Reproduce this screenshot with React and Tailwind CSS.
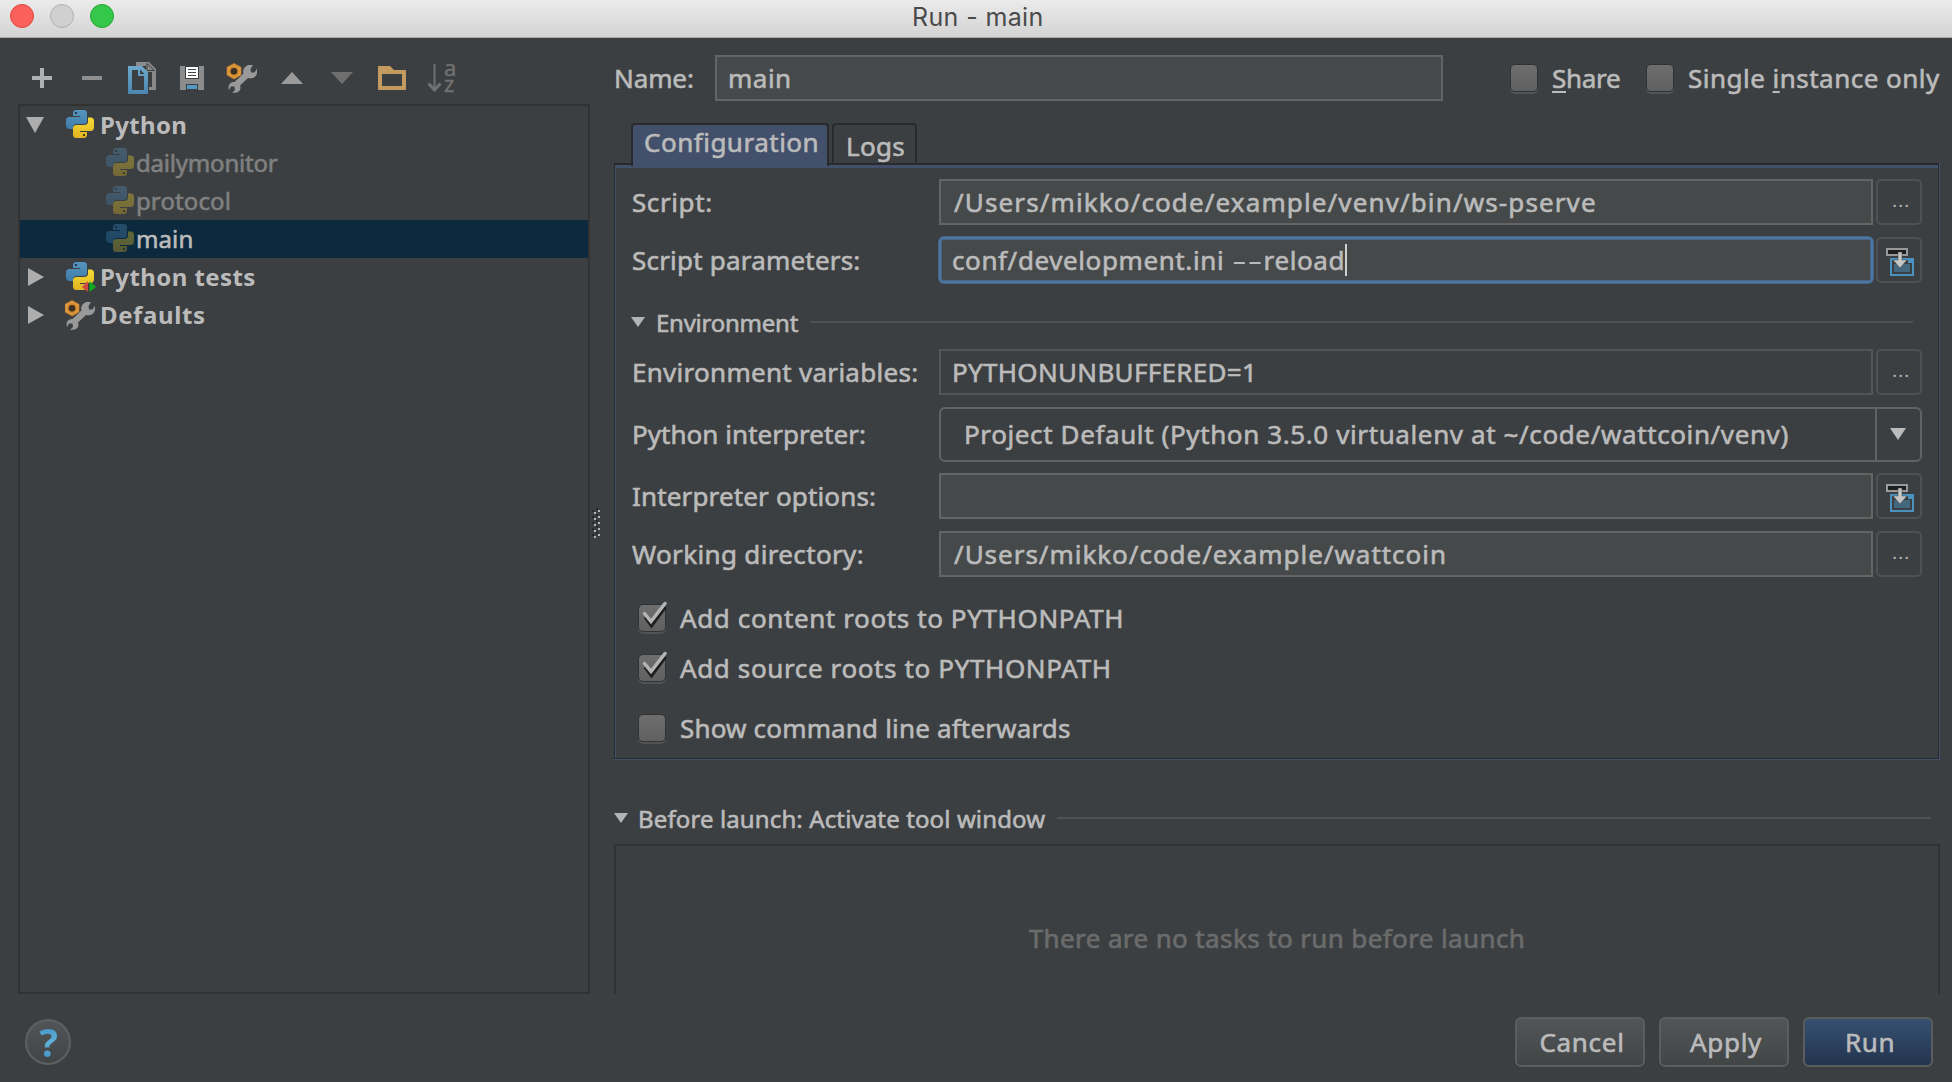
import React from "react";

const TEXT = "font-['Noto_Sans',sans-serif] whitespace-pre";

function Glyph({ children, size = 50, className = "" }) {
  return (
    <svg width={size} height={size} viewBox={`0 0 ${size} ${size}`} className={`shrink-0 ${className}`}>
      {children}
    </svg>
  );
}

function Defs() {
  return (
    <svg width="0" height="0" className="absolute">
      <defs>
        <linearGradient id="pyBlue" x1="0" y1="0" x2="0" y2="1">
          <stop offset="0" stopColor="#5594be" />
          <stop offset="1" stopColor="#3f7cab" />
        </linearGradient>
        <linearGradient id="pyYellow" x1="0" y1="0" x2="0" y2="1">
          <stop offset="0" stopColor="#f5dc35" />
          <stop offset="1" stopColor="#dfb322" />
        </linearGradient>
        <linearGradient id="pageBlue" x1="0" y1="0" x2="0" y2="1">
          <stop offset="0" stopColor="#6fa9cd" />
          <stop offset="1" stopColor="#4a86ae" />
        </linearGradient>
        <radialGradient id="nut">
          <stop offset="0.3" stopColor="#c97a20" />
          <stop offset="1" stopColor="#e5a548" />
        </radialGradient>
      </defs>
    </svg>
  );
}

function PythonIcon({ dim, tests }) {
  return (
    <svg width="30" height="30" viewBox="0 0 30 30" className={dim ? "shrink-0 opacity-35" : "shrink-0"}>
      <path fill="url(#pyBlue)" d="M10.5 0h7Q21 0 21 3v7.500Q21 14 17.500 14H11Q7 14 7 17.500V19H4Q0 19 0 15v-4.500Q0 7 3.500 7H14V6H7V3Q7 0 10.500 0z" />
      <path fill="url(#pyYellow)" d="M17.500 28h-7Q7 28 7 25v-6.500Q7 15 10.500 15H17.500Q22 15 22 11.500V7.500H24.500Q28 7.500 28 11v6Q28 21 24.500 21H14v1h7v3Q21 28 17.500 28z" />
      <rect x="9" y="2" width="2" height="2" fill="#223746" />
      <rect x="17" y="24" width="2" height="2" fill="#4a3c10" />
      {tests && (
        <>
          <path d="M16 25l6-6v11z" fill="#d04a45" />
          <path d="M30 25l-6.500-6v11z" fill="#0cae1c" />
        </>
      )}
    </svg>
  );
}

function WrenchShapes() {
  return (
    <>
      <path
        fill="#999"
        d="M28 14 31 12 36 12 33.500 16 34 19.500 37.500 19.500 40 15.500 40 20C39 24.500 35 26 31 25L23 32.500C24.500 36 22.500 38.500 20 39.500L15 40 18 37 17.500 33.500 14 33.500 12 37C10.500 32 13 29 17.500 29L26.500 20.500C25.500 18 26.500 16 28 14z"
      />
      <path fill="url(#nut)" stroke="#b9772a" strokeWidth="0.8" d="M17 10.500 24 14.200V22L17 26 10 22V14.200z" />
      <circle cx="17" cy="18.200" r="3.300" fill="#3c3024" />
    </>
  );
}

function Toolbar() {
  return (
    <div className="-ml-px mt-[15px] mb-px flex h-[50px]">
      <Glyph><path d="M15 23h8v-8h4v8h8v4h-8v8h-4v-8h-8z" fill="#afb1b3" /></Glyph>
      <Glyph><path d="M15 23h20v4H15z" fill="#8f8f8f" /></Glyph>
      <Glyph>
        <path fill="#8a8a8a" d="M19 9h13l7 7v21h-7v-3h3V19h-6v-6H19z" />
        <path fill="#8a8a8a" stroke="#3c3f41" strokeWidth="1" d="M30 10.500v7h7.500z" />
        <path fill="url(#pageBlue)" fillRule="evenodd" d="M11 13h14l6 6v22H11zM15 17v20h12V23h-6v-6z" />
        <path d="M23 16.500V21h4.500z" fill="#3c3f41" />
      </Glyph>
      <Glyph>
        <path fill="#8c8c8c" d="M13 13h24v24H13z" />
        <path fill="#3c3f41" d="M18 13h14v13H18zM19 31h12v6H19z" />
        <path fill="#fff" d="M19 14h12v11H19z" />
        <path stroke="#444" strokeWidth="1.200" d="M21 16.500h8M21 19.500h8M21 22.500h8" />
        <path fill="#5598c6" d="M20 32h10v4H20z" />
      </Glyph>
      <Glyph><WrenchShapes /></Glyph>
      <Glyph><path d="M25 19 36 31H14z" fill="#9a9a9a" /></Glyph>
      <Glyph><path d="M14 19h22L25 31z" fill="#6f6f6f" /></Glyph>
      <Glyph>
        <path fill="#c49a5f" fillRule="evenodd" d="M11 13h12l4 4h12v20H11zM15 21v12h20V21z" />
      </Glyph>
      <Glyph>
        <path d="M17.500 11v24" stroke="#707070" strokeWidth="2" />
        <path d="M11.500 30.500l6 6.500 6-6.500" fill="none" stroke="#707070" strokeWidth="3" />
        <text fontSize="22" fill="#707070" stroke="#707070" strokeWidth="0.4" fontFamily="Noto Sans">
          <tspan x="27" y="23">a</tspan>
          <tspan x="27" y="39">z</tspan>
        </text>
      </Glyph>
    </div>
  );
}

function Twisty({ open }) {
  return (
    <svg width="18" height="18" viewBox="0 0 18 18" className="mr-[22px] ml-[6px] shrink-0">
      <path d={open ? "M0 1h18L9 17z" : "M2 0v18l16-9z"} fill="#adadad" />
    </svg>
  );
}

function TreeGroup({ open, icon, label, tracking }) {
  return (
    <div className="flex h-[38px] items-center">
      <Twisty open={open} />
      <span className="flex w-[34px] shrink-0">{icon}</span>
      <span className={`${TEXT} text-[24px] leading-[34px] font-bold ${tracking}`}>{label}</span>
    </div>
  );
}

function TreeLeaf({ label, selected, tracking }) {
  return (
    <div className={`flex h-[38px] items-center pl-[86px] ${selected ? "bg-[#0d293e] text-[#bbbbbb]" : "text-[#808080]"}`}>
      <PythonIcon dim />
      <span className={`${TEXT} -mt-[1px] text-[24px] leading-[34px] [-webkit-text-stroke:0.6px] ${tracking}`}>{label}</span>
    </div>
  );
}

function Tree() {
  return (
    <div className="h-[890px] w-[572px] border-2 border-[#323232]">
      <TreeGroup open icon={<PythonIcon />} label="Python" tracking="tracking-[0.35px]" />
      <TreeLeaf label="dailymonitor" tracking="tracking-[-0.2px]" />
      <TreeLeaf label="protocol" tracking="tracking-[0.1px]" />
      <TreeLeaf label="main" selected tracking="tracking-[0.1px]" />
      <TreeGroup icon={<PythonIcon tests />} label="Python tests" tracking="tracking-[0.42px]" />
      <TreeGroup
        icon={
          <svg width="30" height="30" viewBox="10 10 30 30" className="-ml-px">
            <WrenchShapes />
          </svg>
        }
        label="Defaults"
        tracking="tracking-[0.6px]"
      />
    </div>
  );
}

function Splitter() {
  return (
    <div className="flex w-[24px] items-center pl-[2px]">
      <svg width="8" height="30" viewBox="0 0 8 30" className="mt-[13px]">
        {[0, 6, 12, 18, 24].map((y) => (
          <g key={y}>
            <path d={`M4 ${y}h2v2h-2zM0 ${y + 2}h2v2h-2z`} fill="#26282a" />
            <path d={`M6 ${y + 2}h2v2h-2zM2 ${y + 4}h2v2h-2z`} fill="#b4b4b4" />
          </g>
        ))}
      </svg>
    </div>
  );
}

function Check({ on }) {
  return (
    <span className="relative size-[28px] shrink-0">
      <span className="block size-[28px] rounded-[5px] border border-[#303234] bg-linear-to-b from-[#6e6e6e] to-[#606060] shadow-[0_2px_0_#515354]" />
      {on && (
        <svg width="32" height="32" viewBox="0 0 32 32" className="absolute -top-[3px] left-0">
          <path d="M7 16l6.500 9L27.500 6" fill="none" stroke="#1e1e1e" strokeWidth="3" />
          <path d="M6.500 12.500l6.500 8L27 2.500" fill="none" stroke="#b4b4b4" strokeWidth="3.500" strokeLinecap="round" />
        </svg>
      )}
    </span>
  );
}

function Label({ children, tracking = "", className = "" }) {
  return (
    <span className={`${TEXT} text-[26px] leading-[36px] [-webkit-text-stroke:0.6px] ${tracking} ${className}`}>{children}</span>
  );
}

function SideButton({ children }) {
  return (
    <button className="ml-[3px] flex h-[46px] w-[46px] shrink-0 items-center justify-center rounded-[5px] border-2 border-[#4f5254]">
      {children}
    </button>
  );
}

function Dots() {
  return <span className={`${TEXT} mt-[-2px] ml-[5px] text-[16px] leading-[20px] font-medium tracking-[1.7px]`}>...</span>;
}

function InsertIcon() {
  return (
    <svg width="42" height="42" viewBox="2 2 42 42" className="shrink-0">
      <path d="M11 12h20v6H11z" fill="#1d1e1f" stroke="#999" strokeWidth="2" />
      <path d="M15 22h22v16H15z" fill="none" stroke="#4a93c0" strokeWidth="2" />
      <path d="M32 21h6v5h-6z" fill="#4a93c0" />
      <path d="M18 27h16v8H18z" fill="#43687d" />
      <path d="M22 15h4v8h5l-7 8-7-8h5z" fill="#c6c6c6" stroke="#3c3f41" strokeWidth="0.500" />
    </svg>
  );
}

function Row({ label, labelTracking, children, className = "h-[46px]" }) {
  return (
    <div className={`flex items-center ${className}`}>
      <span className="flex w-[308px] shrink-0 pl-px">
        <Label tracking={labelTracking}>{label}</Label>
      </span>
      {children}
    </div>
  );
}

function Field({ children, className = "border-[#646464] bg-[#45494a] pl-[13px]" }) {
  return <div className={`flex h-[46px] w-[934px] shrink-0 items-center border-2 ${className}`}>{children}</div>;
}

function SectionTitle({ label, tracking, gap, className }) {
  return (
    <div className={`flex items-center ${className}`}>
      <svg width="14" height="10" viewBox="0 0 14 10" className="shrink-0">
        <path d="M0 0h14L7 10z" fill="#b4b4b4" />
      </svg>
      <span className={`${TEXT} pt-[2px] text-[24px] leading-[32px] [-webkit-text-stroke:0.6px] ${tracking} ${gap}`}>{label}</span>
      <span className="h-[2px] grow bg-[#515151]" />
    </div>
  );
}

function Tabs() {
  return (
    <div className="flex h-[40px] pl-[17px]">
      <div className="relative z-10 flex h-[43px] w-[198px] rounded-t-[4px] border-2 border-b-0 border-[#282a2c] bg-[#43506c] pl-[11px]">
        <Label tracking="tracking-[0.5px]" className="-mt-px">Configuration</Label>
      </div>
      <div className="ml-[3px] flex h-[40px] w-[85px] rounded-t-[4px] border-2 border-b-0 border-[#282a2c] pt-[3px] pl-[12px]">
        <Label tracking="tracking-[0.3px]">Logs</Label>
      </div>
    </div>
  );
}

function ConfigPanel() {
  return (
    <div className="h-[597px] border-r border-b border-[#43506c]">
      <div className="h-full border border-t-2 border-[#282a2c]">
        <div className="h-full border-t-[3px] border-l border-[#43506c] pt-[11px] pl-[15px]">
          <Row label="Script:" labelTracking="tracking-[0.6px]">
            <Field><Label tracking="tracking-[1.12px]">/Users/mikko/code/example/venv/bin/ws-pserve</Label></Field>
            <SideButton><Dots /></SideButton>
          </Row>
          <div className="h-[12px]" />
          <Row label="Script parameters:" labelTracking="tracking-[0.2px]">
            <Field className="rounded-[5px] border-[#4b76a6] bg-[#45494a] pl-[11px] shadow-[0_0_0_1px_#466583,inset_0_0_0_1px_#466583]">
              <Label tracking="tracking-[0.6px]">
                conf/development.ini <span className="inline-block w-[32px] origin-left scale-x-[1.75] [-webkit-text-stroke:0]">--</span>reload
              </Label>
              <span className="h-[32px] w-[2px] bg-[#d0d0d0]" />
            </Field>
            <SideButton><InsertIcon /></SideButton>
          </Row>
          <SectionTitle
            label="Environment"
            tracking="tracking-[-0.25px]"
            gap="ml-[11px] mr-[12px]"
            className="h-[66px] pt-[12px] pr-[25px]"
          />
          <Row label="Environment variables:" labelTracking="tracking-[0.28px]">
            <Field className="border-[#555555] pl-[11px]"><Label tracking="tracking-[0.3px]">PYTHONUNBUFFERED=1</Label></Field>
            <SideButton><Dots /></SideButton>
          </Row>
          <div className="h-[12px]" />
          <Row label="Python interpreter:" labelTracking="tracking-[0.04px]" className="h-[55px] [&_span]:pb-px">
            <div className="flex h-[55px] w-[983px] shrink-0 rounded-[6px] border-2 border-[#606263]">
              <span className="flex grow items-center pl-[23px]">
                <Label tracking="tracking-[0.61px]">Project Default (Python 3.5.0 virtualenv at ~/code/wattcoin/venv)</Label>
              </span>
              <span className="flex w-[45px] items-center border-l-2 border-[#606263] pl-[13px]">
                <svg width="16" height="12" viewBox="0 0 16 12">
                  <path d="M0 0h16L8 12z" fill="#bbbbbb" />
                </svg>
              </span>
            </div>
          </Row>
          <div className="h-[11px]" />
          <Row label="Interpreter options:" labelTracking="tracking-[0.15px]">
            <Field />
            <SideButton><InsertIcon /></SideButton>
          </Row>
          <div className="h-[12px]" />
          <Row label="Working directory:" labelTracking="tracking-[0.35px]">
            <Field><Label tracking="tracking-[0.97px]">/Users/mikko/code/example/wattcoin</Label></Field>
            <SideButton><Dots /></SideButton>
          </Row>
          <div className="mt-[27px] flex h-[27px] items-center gap-[14px] pl-[7px]">
            <Check on />
            <Label tracking="tracking-[0.61px]">Add content roots to PYTHONPATH</Label>
          </div>
          <div className="mt-[23px] flex h-[27px] items-center gap-[14px] pl-[7px]">
            <Check on />
            <Label tracking="tracking-[0.62px]">Add source roots to PYTHONPATH</Label>
          </div>
          <div className="mt-[33px] flex h-[27px] items-center gap-[14px] pl-[7px]">
            <Check />
            <Label tracking="tracking-[0.17px]">Show command line afterwards</Label>
          </div>
        </div>
      </div>
    </div>
  );
}

function NameRow() {
  return (
    <div className="mt-[17px] flex h-[46px] items-center">
      <span className="flex w-[101px]"><Label tracking="tracking-[-0.1px]">Name:</Label></span>
      <div className="flex h-[46px] w-[728px] items-center border-2 border-[#646464] bg-[#45494a] pl-[11px]">
        <Label tracking="tracking-[0.5px]">main</Label>
      </div>
      <span className="ml-[67px] flex"><Check /></span>
      <span className="ml-[14px] flex w-[95px]">
        <Label tracking="tracking-[-0.3px]"><span className="underline decoration-2 underline-offset-[3px]">S</span>hare</Label>
      </span>
      <span className="-ml-px flex"><Check /></span>
      <span className="ml-[14px] flex">
        <Label tracking="tracking-[0.48px]">Single <span className="underline decoration-2 underline-offset-[3px]">i</span>nstance only</Label>
      </span>
    </div>
  );
}

function FooterButton({ children, primary, tracking }) {
  return (
    <button
      className={`flex h-[50px] w-[130px] items-center justify-center rounded-[6px] border-2 border-[#5a5c5d] bg-linear-to-b ${
        primary ? "from-[#365071] to-[#23344f]" : "from-[#525658] to-[#414546]"
      }`}
    >
      <Label tracking={tracking} className="-mt-px pl-[4px]">{children}</Label>
    </button>
  );
}

export default function App() {
  return (
    <div className="flex h-[1082px] w-[1952px] flex-col overflow-hidden bg-[#3c3f41] text-[#bbbbbb]">
      <Defs />
      <header className="flex h-[38px] shrink-0 border-b border-[#a9a9a9] bg-linear-to-b from-[#ebebeb] to-[#d3d3d3]">
        <div className="flex w-[912px] gap-[16px] pt-[4px] pl-[10px]">
          <span className="size-[24px] rounded-full border border-[#e2463f] bg-[#fc605b]" />
          <span className="size-[24px] rounded-full border border-[#b0b0b0] bg-[#d0d0d0]" />
          <span className="size-[24px] rounded-full border border-[#25a532] bg-[#34c84a]" />
        </div>
        <span className="font-[Inter,sans-serif] text-[25px] leading-[34px] tracking-[0.37px] whitespace-pre text-[#4a4a4a]">Run - main</span>
      </header>

      <main className="flex h-[956px] shrink-0 pl-[18px]">
        <section className="w-[572px] shrink-0">
          <Toolbar />
          <Tree />
        </section>
        <Splitter />
        <section className="w-[1326px] shrink-0">
          <NameRow />
          <div className="h-[22px]" />
          <Tabs />
          <ConfigPanel />
          <SectionTitle
            label="Before launch: Activate tool window"
            tracking="tracking-[0.12px]"
            gap="ml-[10px] mr-[12px]"
            className="h-[84px] pt-[32px] pr-[9px]"
          />
          <div className="flex h-[150px] justify-center border-2 border-b-0 border-[#323232] pt-[74px] text-[#6c6c6c]">
            <Label tracking="tracking-[0.38px]">There are no tasks to run before launch</Label>
          </div>
        </section>
      </main>

      <footer className="flex h-[88px] items-center justify-between pt-[8px] pr-[19px] pl-[25px]">
        <div className="flex size-[46px] items-center justify-center rounded-full border-2 border-[#5e6061] bg-linear-to-b from-[#515557] to-[#414547]">
          <span className="bg-linear-to-b from-[#3f8ec4] via-[#5fb0d8] to-[#3f8ec4] bg-clip-text pl-px font-['Noto_Sans',sans-serif] text-[39px] leading-[42px] font-bold text-transparent">?</span>
        </div>
        <div className="flex gap-[14px]">
          <FooterButton tracking="tracking-[0.7px]">Cancel</FooterButton>
          <FooterButton tracking="tracking-[0.65px]">Apply</FooterButton>
          <FooterButton primary tracking="tracking-[0.6px]">Run</FooterButton>
        </div>
      </footer>
    </div>
  );
}
